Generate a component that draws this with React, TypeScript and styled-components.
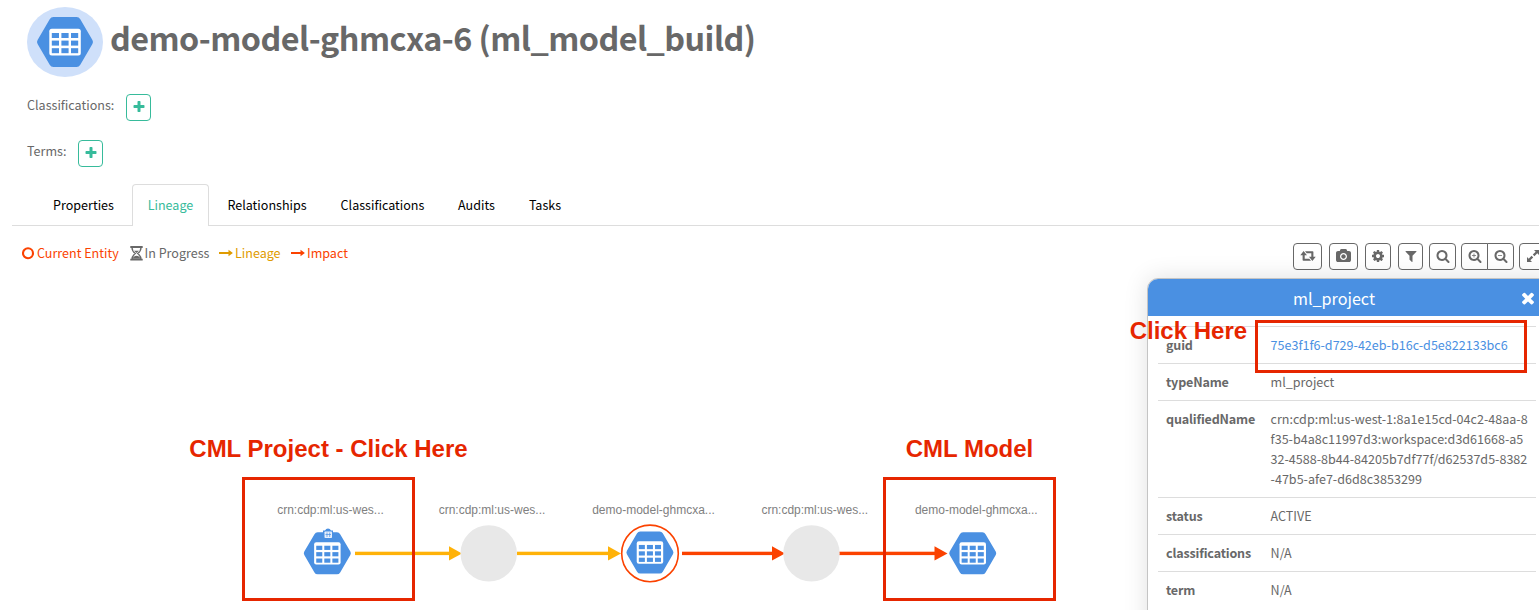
import React from "react";
import styled, { createGlobalStyle, css } from "styled-components";

const Global = createGlobalStyle`
  html, body { margin: 0; padding: 0; }
  body { background: #fff; overflow: hidden; }
  * { box-sizing: border-box; }
`;

const sans = `"Noto Sans CJK SC", "Open Sans", sans-serif`;
const helv = `"Liberation Sans", Arial, sans-serif`;
const RED = "#e62600";

const Page = styled.div`
  position: relative;
  width: 1539px;
  height: 610px;
  overflow: hidden;
  font-family: ${sans};
  font-size: 12.55px;
  line-height: 20px;
  color: #686868;
  background: #fff;
`;

const Header = styled.header`
  display: flex;
  padding: 7px 0 0 27px;
`;

const Title = styled.h1`
  margin: 8px 0 0 7px;
  font-size: 32.3px;
  line-height: 44px;
  font-weight: 700;
  letter-spacing: -0.54px;
  white-space: nowrap;
`;

const TagRow = styled.div<{ $top: number }>`
  display: flex;
  gap: 12px;
  height: 27px;
  margin: ${(p) => p.$top}px 0 0 27px;
`;

const TagLabel = styled.span<{ $w: number }>`
  width: ${(p) => p.$w}px;
  padding-top: 1px;
  white-space: nowrap;
`;

const AddButton = styled.button`
  display: flex;
  align-items: center;
  justify-content: center;
  width: 25px;
  height: 27px;
  padding: 0 0 2px;
  color: #37bb9b;
  background: #fff;
  border: 1px solid #37bb9b;
  border-radius: 4px;
`;

const Tabs = styled.nav`
  display: flex;
  gap: 2px;
  height: 42px;
  margin: 17px 0 0 12px;
  padding-left: 25px;
  border-bottom: 1px solid #ddd;
`;

const Tab = styled.a<{ $w: number; $active?: boolean }>`
  width: ${(p) => p.$w}px;
  height: 42px;
  padding-top: 10px;
  text-align: center;
  white-space: nowrap;
  color: #000;
  border: 1px solid transparent;
  border-bottom: 0;
  ${(p) =>
    p.$active &&
    css`
      color: #37bb9b;
      background: #fff;
      border-color: #ddd;
      border-radius: 4px 4px 0 0;
    `}
`;

const Bar = styled.div`
  display: flex;
  justify-content: space-between;
  padding-top: 17px;
`;

const Legend = styled.div`
  display: flex;
  margin-left: 22px;
`;

const LegendItem = styled.span<{ $w: number; $c: string }>`
  display: flex;
  align-items: center;
  gap: 2px;
  width: ${(p) => p.$w}px;
  height: 20px;
  color: ${(p) => p.$c};
  white-space: nowrap;
  svg { flex: none; }
`;

const Tools = styled.div`
  display: flex;
  width: 246px;
`;

const Tool = styled.button<{ $w: number; $ml?: number; $r?: string }>`
  display: flex;
  flex: none;
  align-items: center;
  justify-content: center;
  width: ${(p) => p.$w}px;
  height: 27px;
  margin-left: ${(p) => p.$ml ?? 0}px;
  padding: 0 0 1px;
  color: #686868;
  background: #fff;
  border: 1px solid #686868;
  border-radius: ${(p) => p.$r ?? "4px"};
`;

const Canvas = styled.div`
  position: absolute;
  inset: 0;
  pointer-events: none;
  svg { position: absolute; left: 0; top: 0; }
`;

const NodeLabel = styled.span<{ $x: number }>`
  position: absolute;
  left: ${(p) => p.$x - 70}px;
  top: 500px;
  width: 140px;
  text-align: center;
  font: 12px/20px ${helv};
  color: #808080;
  white-space: nowrap;
`;

const Panel = styled.aside`
  position: absolute;
  left: 1147px;
  top: 278px;
  width: 420px;
  height: 360px;
  border: 1px solid #c4c4c4;
  border-radius: 11px 11px 0 0;
  background: #fff;
  box-shadow: 0 0 24px rgba(0, 0, 0, 0.12);
  overflow: hidden;
`;

const PanelHead = styled.div`
  display: flex;
  align-items: center;
  height: 37px;
  color: #fff;
  background: #4a90e2;
`;

const PanelTitle = styled.span`
  width: 371px;
  padding: 1px 0 0 1px;
  text-align: center;
  font-size: 16.15px;
  line-height: 24px;
`;

const Rows = styled.div`
  width: 378px;
  margin: 10px 0 0 10px;
`;

const Row = styled.div`
  display: flex;
  padding: 8px;
  border-top: 1px solid #ddd;
`;

const Key = styled.span`
  width: 104.6px;
  font-weight: 700;
  letter-spacing: -0.17px;
`;

const Value = styled.span<{ $link?: boolean }>`
  color: ${(p) => (p.$link ? "#4a90e2" : "inherit")};
  white-space: pre;
`;

const Callout = styled.div<{ $x: number; $y: number; $w: number; $h: number }>`
  position: absolute;
  left: ${(p) => p.$x}px;
  top: ${(p) => p.$y}px;
  width: ${(p) => p.$w}px;
  height: ${(p) => p.$h}px;
  border: 3px solid ${RED};
`;

const Note = styled.div<{ $x: number; $y: number }>`
  position: absolute;
  left: ${(p) => p.$x}px;
  top: ${(p) => p.$y}px;
  font: bold 24px/28px ${helv};
  color: ${RED};
  white-space: nowrap;
`;

const lens =
  "M1216 832q0-185-131.5-316.5t-316.5-131.5-316.5 131.5-131.5 316.5 131.5 316.5 316.5 131.5 316.5-131.5 131.5-316.5zm512 832q0 52-38 90t-90 38q-54 0-90-38l-343-342q-179 124-399 124-143 0-273.5-55.5t-225-150-150-225-55.5-273.5 55.5-273.5 150-225 225-150 273.5-55.5 273.5 55.5 225 150 150 225 55.5 273.5q0 220-124 399l343 343q37 37 37 90z";

const paths = {
  search: lens,
  zoomIn: lens + "M720 570h96v214h214v96h-214v214h-96v-214h-214v-96h214z",
  zoomOut: lens + "M506 784h524v96h-524z",
  cog: "M1152 896q0-106-75-181t-181-75-181 75-75 181 75 181 181 75 181-75 75-181zm512-109v222q0 12-8 23t-20 13l-185 28q-19 54-39 91 35 50 107 138 10 12 10 25t-9 23q-27 37-99 108t-94 71q-12 0-26-9l-138-108q-44 23-91 38-16 136-29 186-7 28-36 28h-222q-14 0-24.5-8.5t-11.5-21.5l-28-184q-49-16-90-37l-141 107q-10 9-25 9-14 0-25-11-126-114-165-168-7-10-7-23 0-12 8-23 15-21 51-66.5t54-70.5q-27-50-41-99l-183-27q-13-2-21-12.5t-8-23.5v-222q0-12 8-23t19-13l186-28q14-46 39-92-40-57-107-138-10-12-10-24 0-10 9-23 26-36 98.5-107.5t94.5-71.5q13 0 26 10l138 107q44-23 91-38 16-136 29-186 7-28 36-28h222q14 0 24.5 8.5t11.5 21.5l28 184q49 16 90 37l142-107q9-9 24-9 13 0 25 10 129 119 165 170 7 8 7 22 0 12-8 23-15 21-51 66.5t-54 70.5q26 50 41 98l183 28q13 2 21 12.5t8 23.5z",
  filter:
    "M1595 295q17 41-14 70l-493 493v742q0 42-39 59-13 5-25 5-27 0-45-19l-256-256q-19-19-19-45v-486l-493-493q-31-29-14-70 17-39 59-39h1280q42 0 59 39z",
  camera:
    "M960 672q119 0 203.5 84.5t84.5 203.5-84.5 203.5-203.5 84.5-203.5-84.5-84.5-203.5 84.5-203.5 203.5-84.5zm704-416q106 0 181 75t75 181v896q0 106-75 181t-181 75h-1408q-106 0-181-75t-75-181v-896q0-106 75-181t181-75h224l51-136q19-49 69.5-84.5t103.5-35.5h512q53 0 103.5 35.5t69.5 84.5l51 136h224zm-704 1152q185 0 316.5-131.5t131.5-316.5-131.5-316.5-316.5-131.5-316.5 131.5-131.5 316.5 131.5 316.5 316.5 131.5z",
  close:
    "M1490 1322q0 40-28 68l-136 136q-28 28-68 28t-68-28l-294-294-294 294q-28 28-68 28t-68-28l-136-136q-28-28-28-68t28-68l294-294-294-294q-28-28-28-68t28-68l136-136q28-28 68-28t68 28l294 294 294-294q28-28 68-28t68 28l136 136q28 28 28 68t-28 68l-294 294 294 294q28 28 28 68z",
  plus: "M1600 736v192q0 40-28 68t-68 28h-416v416q0 40-28 68t-68 28h-192q-40 0-68-28t-28-68v-416h-416q-40 0-68-28t-28-68v-192q0-40 28-68t68-28h416v-416q0-40 28-68t68-28h192q40 0 68 28t28 68v416h416q40 0 68 28t28 68z",
};

const Icon = ({ name, size = 14, vw = 1792 }: { name: keyof typeof paths; size?: number; vw?: number }) => (
  <svg width={(size * vw) / 1792} height={size} viewBox={`0 0 ${vw} 1792`} fill="currentColor">
    <path d={paths[name]} />
  </svg>
);

const LongArrow = () => (
  <svg width="14" height="8" viewBox="0 0 14 8" fill="currentColor">
    <path d="M0 3h9.500V0.800l4.400 3.200-4.400 3.200V5H0z" />
  </svg>
);

const TableHex = () => (
  <>
    <path
      d="M16.500 0h23q2.500 0 3.800 2.200L55.400 23q1.200 2 0 4L43.300 47.800Q42 50 39.500 50h-23q-2.500 0-3.800-2.200L0.600 27q-1.200-2 0-4L12.700 2.200Q14 0 16.500 0z"
      fill="#4a90e2"
    />
    <rect x="12.300" y="11.700" width="31.500" height="26.700" rx="2.500" fill="#fff" />
    {[16, 23.6, 31.2].map((y) =>
      [14.8, 24.4, 34].map((x) => <rect key={`${x}-${y}`} x={x} y={y} width="7.200" height="5" fill="#4a90e2" />)
    )}
  </>
);

const HexAt = ({ x, y }: { x: number; y: number }) => (
  <g transform={`translate(${x} ${y}) scale(0.84)`}>
    <TableHex />
  </g>
);

const Edge = ({ from, to, color }: { from: number; to: number; color: string }) => (
  <g fill={color}>
    <rect x={from} y="551.700" width={to - from - 10} height="3.400" />
    <path d={`M${to - 13} 546.300L${to} 553.400L${to - 13} 560.500z`} />
  </g>
);

const details: { k: string; v: string; link?: boolean }[] = [
  { k: "guid", v: "75e3f1f6-d729-42eb-b16c-d5e822133bc6", link: true },
  { k: "typeName", v: "ml_project" },
  {
    k: "qualifiedName",
    v: "crn:cdp:ml:us-west-1:8a1e15cd-04c2-48aa-8\nf35-b4a8c11997d3:workspace:d3d61668-a5\n32-4588-8b44-84205b7df77f/d62537d5-8382\n-47b5-afe7-d6d8c3853299",
  },
  { k: "status", v: "ACTIVE" },
  { k: "classifications", v: "N/A" },
  { k: "term", v: "N/A" },
];

export default function App() {
  return (
    <Page>
      <Global />
      <Header>
        <svg width="76" height="70" viewBox="0 0 76 70">
          <ellipse cx="38" cy="35" rx="38" ry="35" fill="#cfe0fa" />
          <g transform="translate(10 10)">
            <TableHex />
          </g>
        </svg>
        <Title>demo-model-ghmcxa-6 (ml_model_build)</Title>
      </Header>
      <TagRow $top={17}>
        <TagLabel $w={87}>Classifications:</TagLabel>
        <AddButton><Icon name="plus" /></AddButton>
      </TagRow>
      <TagRow $top={19}>
        <TagLabel $w={39}>Terms:</TagLabel>
        <AddButton><Icon name="plus" /></AddButton>
      </TagRow>
      <Tabs>
        <Tab $w={93}>Properties</Tab>
        <Tab $w={77} $active>Lineage</Tab>
        <Tab $w={112}>Relationships</Tab>
        <Tab $w={115}>Classifications</Tab>
        <Tab $w={69}>Audits</Tab>
        <Tab $w={64}>Tasks</Tab>
      </Tabs>
      <Bar>
        <Legend>
          <LegendItem $w={107.5} $c="#fb4200">
            <svg width="13" height="13" viewBox="0 0 13 13"><circle cx="6" cy="6.200" r="5" fill="none" stroke="currentColor" strokeWidth="2.100" /></svg>
            Current Entity
          </LegendItem>
          <LegendItem $w={89.5} $c="#686868">
            <svg width="13" height="15" viewBox="0 0 13 15" fill="none" stroke="currentColor">
              <path d="M0.300 1h12.400M0.300 13.600h12.400" strokeWidth="1.800" />
              <path d="M2 1.500c0 3.500 1.500 4.700 3.300 6-1.800 1.300-3.300 2.500-3.300 6M11 1.500c0 3.500-1.500 4.700-3.300 6 1.800 1.300 3.300 2.500 3.300 6" strokeWidth="1.300" />
              <path d="M2.800 12.800c0.500-2.300 1.900-3 3.700-3s3.200 0.700 3.700 3zM4 4.800h5l-2.500 2.200z" fill="currentColor" stroke="none" />
            </svg>
            In Progress
          </LegendItem>
          <LegendItem $w={72} $c="#df9b00"><LongArrow />Lineage</LegendItem>
          <LegendItem $w={60} $c="#fb4200"><LongArrow />Impact</LegendItem>
        </Legend>
        <Tools>
          <Tool $w={29}>
            <svg width="16" height="12" viewBox="0 0 16 12" fill="currentColor">
              <path d="M3.600 1L7 5.200H4.700v3.600h4.600l1.700 2H3.400q-0.800 0-0.800-0.800V5.200H0.300z" />
              <path d="M12.400 11L9 6.800h2.300V3.200H6.700L5 1.200h7.600q0.800 0 0.800 0.800v4.800h2.300z" />
            </svg>
          </Tool>
          <Tool $w={29} $ml={7}><Icon name="camera" vw={1920} /></Tool>
          <Tool $w={26} $ml={7}><Icon name="cog" /></Tool>
          <Tool $w={25} $ml={7}><Icon name="filter" /></Tool>
          <Tool $w={27} $ml={6}><Icon name="search" /></Tool>
          <Tool $w={27} $ml={5} $r="4px 0 0 4px"><Icon name="zoomIn" /></Tool>
          <Tool $w={27} $ml={-1} $r="0 4px 4px 0"><Icon name="zoomOut" /></Tool>
          <Tool $w={27} $ml={5}>
            <svg width="14" height="14" viewBox="0 0 14 14" fill="currentColor">
              <path d="M8 1h5v5l-1.700-1.700-2.900 2.900-1.600-1.600 2.900-2.900zM6 13H1V8l1.700 1.700 2.900-2.900 1.600 1.600-2.900 2.900z" />
            </svg>
          </Tool>
        </Tools>
      </Bar>

      <Canvas>
        <svg width="1140" height="610" viewBox="0 0 1140 610">
          <Edge from={355} to={462} color="#ffb208" />
          <Edge from={517} to={621} color="#ffb208" />
          <Edge from={682} to={785} color="#fb4200" />
          <Edge from={839} to={947.500} color="#fb4200" />
          <circle cx="488.700" cy="553.400" r="28.200" fill="#e8e8e8" />
          <circle cx="811.500" cy="553.400" r="28.200" fill="#e8e8e8" />
          <circle cx="650" cy="553.400" r="28.300" fill="#fff" stroke="#fb4200" strokeWidth="1.600" />
          <HexAt x={303.800} y={532.300} />
          <path d="M323 534v-3.500h2q1-2 3-2t3 2h2v3.500z" fill="#4a90e2" />
          <rect x="324.500" y="531.500" width="7.500" height="6.500" rx="0.800" fill="#e8f0fc" />
          <path d="M327 532.500v4.500M329.700 532.500v4.500M325.500 534.500h5.500" stroke="#4a90e2" strokeWidth="0.700" />
          <HexAt x={626.400} y={531.500} />
          <HexAt x={949.200} y={532.300} />
        </svg>
        <NodeLabel $x={330.500}>crn:cdp:ml:us-wes...</NodeLabel>
        <NodeLabel $x={492}>crn:cdp:ml:us-wes...</NodeLabel>
        <NodeLabel $x={653.500}>demo-model-ghmcxa...</NodeLabel>
        <NodeLabel $x={814.800}>crn:cdp:ml:us-wes...</NodeLabel>
        <NodeLabel $x={976.300}>demo-model-ghmcxa...</NodeLabel>
      </Canvas>

      <Panel>
        <PanelHead>
          <PanelTitle>ml_project</PanelTitle>
          <Icon name="close" size={18} />
        </PanelHead>
        <Rows>
          {details.map((d) => (
            <Row key={d.k}>
              <Key>{d.k}</Key>
              <Value $link={d.link}>{d.v}</Value>
            </Row>
          ))}
        </Rows>
      </Panel>

      <Callout $x={242} $y={477} $w={173} $h={124} />
      <Callout $x={883} $y={477} $w={173} $h={124} />
      <Callout $x={1255} $y={320} $w={272} $h={53} />
      <Note $x={189.300} $y={435}>CML Project - Click Here</Note>
      <Note $x={905.700} $y={435}>CML Model</Note>
      <Note $x={1129.700} $y={317}>Click Here</Note>
    </Page>
  );
}
